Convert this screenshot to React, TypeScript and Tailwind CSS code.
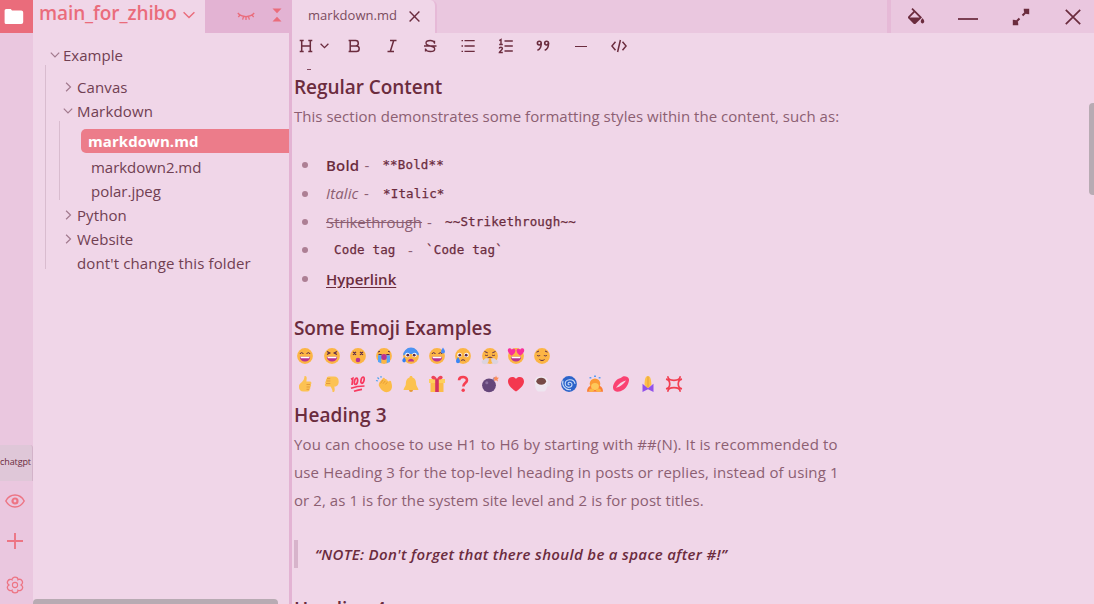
import React from 'react';
import { BiSolidColorFill } from 'react-icons/bi';

type IconProps = { className?: string; children: React.ReactNode; box?: string };

function Stroke({ className = '', children, box = '0 0 16 16' }: IconProps) {
  return (
    <svg viewBox={box} className={'shrink-0 ' + className} fill="none" stroke="currentColor" strokeWidth="1.4">
      {children}
    </svg>
  );
}

function Chevron({ open = false }: { open?: boolean }) {
  return (
    <Stroke className="size-[10px] text-[#a27a8e]" box="0 0 10 10">
      {open ? <path d="M.8 2.6 5 7l4.2-4.4" strokeWidth="1.2" /> : <path d="M3.1.8 7.500 5 3.1 9.2" strokeWidth="1.2" />}
    </Stroke>
  );
}

function Rail() {
  return (
    <aside className="flex w-[33px] shrink-0 flex-col bg-[#eac7df] text-[#ed7584]">
      <div className="flex h-[33px] items-center justify-center bg-[#ea6c7b] pr-[5px] text-white">
        <svg viewBox="0 0 20 17" className="h-[17px] w-[20px]" fill="currentColor">
          <path d="M2.2 1h4.600l1.200 1.500h9.200a2 2 0 0 1 2 2V14a2 2 0 0 1-2 2H2.2a1.6 1.6 0 0 1-1.600-1.6V2.6A1.6 1.6 0 0 1 2.2 1Z" />
        </svg>
      </div>
      <div className="grow" />
      <div className="flex h-[36px] items-center rounded-tr-[3px] border-r border-[#d3b3c9] bg-[#dfc7d8] pb-[3px]">
        <span className="text-[9px] tracking-[-0.1px] whitespace-pre text-[#6b2c3e]">chatgpt</span>
      </div>
      <div className="flex h-[40px] items-center justify-center pr-[3px]">
        <Stroke className="h-[14px] w-[20px]" box="0 0 20 14">
          <path d="M.8 7C3 3 6.3 1.1 10 1.1S17 3 19.2 7C17 11 13.7 12.900 10 12.900S3 11 .8 7Z" strokeWidth="1.500" />
          <circle cx="10" cy="7" r="2.500" strokeWidth="2.200" />
        </Stroke>
      </div>
      <div className="flex h-[40px] items-center justify-center pr-[3px]">
        <Stroke className="size-[16px]"><path d="M8 0v16M0 8h16" strokeWidth="1.9" /></Stroke>
      </div>
      <div className="flex h-[43px] items-center justify-center pt-[4px] pr-[3px]">
        <Stroke className="size-[18px]" box="0 0 18 18">
          <path strokeWidth="1.300" d="M15 9A2.800 2.800 0 0 1 12 14.200A3 2.600 0 0 1 6 14.200A2.800 2.800 0 0 1 3 9A2.800 2.800 0 0 1 6 3.800A3 2.600 0 0 1 12 3.800A2.800 2.800 0 0 1 15 9Z" />
          <circle cx="9" cy="9" r="2.600" strokeWidth="1.100" />
        </Stroke>
      </div>
    </aside>
  );
}

const row = 'flex h-[24px] items-center gap-[4px] whitespace-pre';

function Tree() {
  return (
    <div className="flex flex-1 flex-col pt-[10px] text-[15px] text-[#704052]">
      <div className={row + ' pl-[17px]'}><Chevron open /><span className="-ml-px tracking-[0.02px]">Example</span></div>
      <div className="-mt-[2px] ml-[12px] flex flex-col border-l border-[#d9bccf] pt-[7px]">
        <div className="-mb-[6px] flex flex-col pt-[3px]">
          <div className={row + ' pl-[17px]'}><Chevron /><span className="tracking-[0.1px]">Canvas</span></div>
          <div className={row + ' pl-[17px]'}><Chevron open /><span className="tracking-[0.14px]">Markdown</span></div>
          <div className="-mt-[2px] mb-[3px] ml-[13px] flex flex-col border-l border-[#d9bccf] pt-[8px]">
            <div className="ml-[21px] flex h-[24px] items-center rounded-l-[5px] bg-[#ec7c8a] pl-[7px] font-bold whitespace-pre text-white">
              <span className="tracking-[0.06px]">markdown.md</span>
            </div>
            <div className="-mb-[3px] flex flex-col pt-[2px]">
              <div className={row + ' pl-[31px]'}><span className="tracking-[-0.04px]">markdown2.md</span></div>
              <div className={row + ' pl-[31px]'}><span>polar.jpeg</span></div>
            </div>
          </div>
          <div className={row + ' pl-[17px]'}><Chevron /><span className="tracking-[0.1px]">Python</span></div>
          <div className={row + ' pl-[17px]'}><Chevron /><span>Website</span></div>
          <div className={row + ' pl-[31px]'}><span className="tracking-[0.13px]">dont't change this folder</span></div>
        </div>
      </div>
    </div>
  );
}

function Explorer() {
  return (
    <section className="flex w-[256px] shrink-0 flex-col">
      <header className="flex h-[33px] text-[#ea6c7b]">
        <div className="flex w-[172px] items-center gap-[6px] pb-[7px] pl-[6px]">
          <span className="text-[19px] font-semibold tracking-[-0.1px] whitespace-pre">main_for_zhibo</span>
          <Stroke className="mt-[3px] h-[8px] w-[12px]" box="0 0 12 8"><path d="M.6 1.2 6 6.6l5.4-5.4" strokeWidth="1.400" /></Stroke>
        </div>
        <div className="flex flex-1 items-center justify-end gap-[17px] bg-[#e3b3d3] pr-[7px] pb-[4px]">
          <Stroke className="mt-[3px] h-[9px] w-[18px]" box="0 0 18 9">
            <path d="M.8 1C5 5.700 13 5.700 17.200 1M3.200 2.800 1.300 5M6.600 4.400 5.600 7.600M11.400 4.400l1 3.200M14.800 2.800 16.700 5M9 4.600V8" strokeWidth="1.300" />
          </Stroke>
          <svg viewBox="0 0 10 14" className="h-[14px] w-[10px]" fill="currentColor"><path d="M.5.5h9L5 5.300ZM.5 13.500h9L5 8.700Z" /></svg>
        </div>
      </header>
      <Tree />
      <div className="h-[5px] w-[245px] rounded-t-[4px] bg-[#b8abb3]" />
    </section>
  );
}

function TabBar() {
  return (
    <header className="flex h-[33px] shrink-0 bg-[#eac7df] text-[#6b2c3e]">
      <div className="flex w-[145px] items-center gap-[12px] rounded-tr-[6px] border-r-2 border-[#e6b9d7] bg-[#f0d6e8] pl-[16px]">
        <span className="pb-[2px] text-[13px] tracking-[0.04px] text-[#7b4c5e]">markdown.md</span>
        <Stroke className="size-[11px]" box="0 0 11 11"><path d="M.6.6l9.800 9.800M10.400.6.6 10.400" strokeWidth="1.400" /></Stroke>
      </div>
      <div className="flex-1" />
      <div className="flex w-[207px] items-center border-l-4 border-[#e6b9d7]">
        <div className="flex w-[49px] shrink-0 justify-center"><BiSolidColorFill className="size-[21px]" /></div>
        <div className="flex w-[56px] shrink-0 justify-center pt-[4px]"><div className="h-[2px] w-[20px] bg-[#7b3f53]" /></div>
        <div className="flex w-[50px] shrink-0 justify-center pt-[1px]">
          <Stroke className="size-[18px]" box="0 0 18 18">
            <path d="M10.500 7.500 15 3M7.500 10.500 3 15" strokeWidth="2" />
            <path d="M11.700.8h5.500v5.500L14.500 6.100 11.900 3.500ZM.8 11.700v5.500h5.500L6.100 14.500 3.500 11.900Z" fill="currentColor" stroke="none" />
          </Stroke>
        </div>
        <div className="flex w-[48px] shrink-0 justify-center pl-[6px]">
          <Stroke className="size-[16px]"><path d="m.8.8 14.400 14.400M15.200.8.8 15.200" strokeWidth="1.700" /></Stroke>
        </div>
      </div>
    </header>
  );
}

function Toolbar() {
  const cell = 'flex w-[37.9px] justify-center';
  const slab = 'size-[16px]';
  return (
    <div className="flex h-[26px] shrink-0 items-center pl-[6px] text-[#6b2c3e]">
      <div className="flex w-[38px] items-center gap-[6px]">
        <Stroke className={slab}><path d="M1.700 2.500h4M10.300 2.500h4M1.700 13.500h4M10.300 13.500h4M3.700 2.500v11M12.300 2.500v11M3.700 8h8.600" strokeWidth="1.500" /></Stroke>
        <Stroke className="h-[6px] w-[9px]" box="0 0 9 6"><path d="M.6.8 4.500 4.700 8.400.8" strokeWidth="1.300" /></Stroke>
      </div>
      <div className={cell + ' -ml-[1px]'}>
        <Stroke className={slab}><path d="M2.600 2.500h7a2.700 2.700 0 0 1 0 5.400H4.200M9.600 7.900h.8a2.800 2.800 0 0 1 0 5.600H2.600M4.200 2.500v11" strokeWidth="1.500" /></Stroke>
      </div>
      <div className={cell}><Stroke className={slab}><path d="M6 2.500h6.500M3.500 13.500H10M9.700 2.500l-3.400 11" strokeWidth="1.500" /></Stroke></div>
      <div className={cell}>
        <Stroke className={slab}><path d="M12.500 5.800V2.800M12.500 4.900C11.900 3.200 10.200 2.500 8.300 2.500 5.800 2.500 4 3.400 4 5.100c0 1.900 1.900 2.400 4.300 2.900 2.600.5 4.400 1.100 4.400 2.900 0 1.700-1.800 2.600-4.300 2.600-2.400 0-4.200-.8-4.900-2.600M3.500 10.400v3.200M2 8h12.500" strokeWidth="1.350" /></Stroke>
      </div>
      <div className={cell}>
        <Stroke className={slab}><path d="M4.500 2.700h10.200M4.500 8h10.200M4.500 13.300h10.200M1.500 2.700H3M1.500 8H3M1.500 13.300H3" strokeWidth="1.300" /></Stroke>
      </div>
      <div className={cell}>
        <Stroke className={slab}><path d="M6.500 3h8.300M6.500 8h8.300M6.500 13h8.300" strokeWidth="1.400" /><path d="M1.300 2.600 3 1.500v5M1.200 6.500h3.600M1.200 10.500c.3-1.600 3.200-1.700 3.200.1 0 1.500-2.600 2.100-3 3.900h3.400" strokeWidth="1.400" /></Stroke>
      </div>
      <div className={cell}>
        <Stroke className={slab}><path d="M6.200 5.200c0 4-1.200 6.300-3.800 7M13.500 5.200c0 4-1.200 6.300-3.800 7" strokeWidth="1.600" /><circle cx="4.300" cy="5.100" r="1.900" strokeWidth="1.600" /><circle cx="11.600" cy="5.100" r="1.900" strokeWidth="1.600" /></Stroke>
      </div>
      <div className={cell}><div className="mt-[1px] h-[1.500px] w-[12px] bg-[#6b2c3e]" /></div>
      <div className={cell}>
        <Stroke className={slab}><path d="M4.500 3.800.9 8l3.600 4.200M11.500 3.800 15.100 8l-3.600 4.200M9.400 2 6.600 14" strokeWidth="1.500" /></Stroke>
      </div>
    </div>
  );
}

function Bullet({ children }: { children: React.ReactNode }) {
  return (
    <li className="flex h-[28.4px] items-center whitespace-pre">
      <span className="mr-[18px] ml-[8px] size-[6px] rounded-full bg-[#ad7f94]" />
      {children}
    </li>
  );
}

const code = "pt-[1px] font-['DejaVu_Sans_Mono',monospace] text-[12.5px] tracking-[0.17px] text-[#6b2c3e] [-webkit-text-stroke:0.25px]";
const heading = 'flex items-center text-[19px] font-semibold whitespace-pre text-[#6b2c3e]';

const dark = '#5c2a4a';
const mouth = '#b9328f';
const face = <circle cx="9" cy="9" r="7.900" fill="#fcb544" />;
const grin = <path d="M3.800 9.700h10.400a5.200 4.900 0 0 1-10.400 0Z" fill={mouth} />;
const teeth = <path d="M4.400 9.700h9.200l-.5 1.600H4.900Z" fill="#fff" />;
const arcs = <path d="M4 7c.5-1.800 2.800-1.800 3.300 0M10.700 7c.5-1.800 2.800-1.800 3.300 0" fill="none" stroke={dark} />;
const eyes = <><circle cx="5.500" cy="8" r="2.300" fill="#fff" /><circle cx="12.500" cy="8" r="2.300" fill="#fff" /><circle cx="5.800" cy="8.200" r="1.400" fill={dark} /><circle cx="12.200" cy="8.200" r="1.400" fill={dark} /></>;

const faces: [string, React.ReactNode][] = [
  ['😄', <>{face}{arcs}{grin}{teeth}</>],
  ['😆', <>{face}<path d="m4 4.500 2.800 1.500L4 7.500M14 4.500 11.200 6 14 7.500" fill="none" stroke={dark} strokeWidth="1.200" />{grin}{teeth}</>],
  ['😵', <>{face}<path d="m4 4.800 3 3m0-3-3 3m7-3 3 3m0-3-3 3" stroke={dark} strokeWidth="1.200" /><circle cx="9" cy="13" r="2.300" fill={mouth} /></>],
  ['😭', <>{face}<path d="M3.500 7.500h3.200M11.300 7.500h3.200M5 4.200l-2 .9M13 4.200l2 .9" stroke={dark} /><circle cx="9" cy="10" r="3" fill={mouth} /><path d="M3 8.300h3.300v8L3 15ZM11.700 8.300H15V15l-3.300 1.300Z" fill="#55a5f8" /></>],
  ['😰', <>{face}<path d="M1.100 8.500a7.900 7.900 0 0 1 15.800 0C13 6.500 5 6.500 1.100 8.500Z" fill="#4b93f4" />{eyes}<path d="M6 14.500c0-3.600 6-3.600 6 0Z" fill={mouth} /><path d="M2.300 10c1 1.800 1.600 2.600 1.600 3.600a1.800 1.800 0 0 1-3.600 0c0-1 .9-1.800 2-3.600Z" fill="#3380f5" /></>],
  ['😅', <>{face}{arcs}{grin}{teeth}<path d="M15 .6c1.100 1.900 2 2.900 2 4a2 2 0 0 1-4 0c0-1.100.9-2.100 2-4Z" fill="#4b8bf7" /></>],
  ['😢', <>{face}{eyes}<path d="M6.800 14c.9-1.600 3.500-1.600 4.400 0" fill="none" stroke={dark} /><path d="M4 10c1.200 2 2 2.900 2 4.200a2 2 0 0 1-4 0C2 12.900 2.900 12 4 10Z" fill="#3986f8" /></>],
  ['😤', <>{face}<path d="m3.500 4.500 3.200 1.300M14.500 4.500l-3.200 1.300M4 7.800c.5 1 2.500 1 3 0M11 7.800c.5 1 2.500 1 3 0M6.500 11c1-1 4-1 5 0" fill="none" stroke={dark} /><path d="M7.800 11.500c.5 5-3 6.500-6 5.200C-.5 15 1 12.500 3 13c.5-1.800 3-1.800 4.800-1.500ZM10.200 11.500c-.5 5 3 6.500 6 5.200 2.300-1.700.8-4.200-1.200-3.700-.5-1.800-3-1.800-4.800-1.500Z" fill="#dcd3df" /></>],
  ['😍', <>{face}<path d="M4.800 8.800C-1.500 4.200 1 .5 3 1.300c1 0 1.600.8 1.800 1.500C5.500 1.500 8.800.7 8.400 4c-.3 2-2 3.500-3.600 4.800ZM13.200 8.800c6.300-4.600 3.800-8.300 1.800-7.500-1 0-1.600.8-1.800 1.500C12.500 1.500 9.200.7 9.600 4c.3 2 2 3.500 3.600 4.800Z" fill="#f92f9b" />{grin}{teeth}</>],
  ['😌', <>{face}<path d="M3.500 5.200 6 4M14.500 5.200 12 4M4 8c.5 1.200 2.700 1.200 3.200 0M10.800 8c.5 1.200 2.700 1.200 3.200 0M6.500 12.500c1.200 1.300 3.800 1.300 5 0" fill="none" stroke={dark} /></>],
];

const things: [string, React.ReactNode][] = [
  ['👍', <><path d="M8.500 1c1.800-.5 2.300 1 2.200 2.600l-.3 3h3.400c2 0 2 2.600.8 2.900.9.700.5 2.300-.4 2.500.6.900.1 2-.7 2.300.3 1.500-.6 2.200-2 2.200H7.600C4.500 16.500 3 14.500 3 12.500v-2C4 7.500 8.500 6.500 8.500 1Z" fill="#fcc253" /><path d="M10.500 9.500h3.800M10.500 12h3.300M10.500 14.300h2.700" stroke="#e39a3c" /></>],
  ['👎', <><path d="M9.500 17c1.800.5 2.300-1 2.200-2.600l-.3-3h1.400c2.600-1 2.900-3 2.900-5.200C15.500 3 14 1.500 11 1.500H5.800c-1.400 0-2.300.7-2 2.200-.8.300-1.300 1.400-.7 2.300-.9.200-1.300 1.800-.4 2.500-1.200.3-1.200 2.900.8 2.900h4c1 1.500 2 3 2 5.600Z" fill="#fcc253" /><path d="M3 8.500h4.300M3.500 6h3.800M4 3.700h3.300" stroke="#e39a3c" /></>],
  ['💯', <path d="m2 4.300 1.800-1L3 10M7.700 3.200C5.500 3.200 4.500 9 6.300 9.500 8.500 9.500 9.600 3.500 7.700 3.200ZM14.300 2c-2.200 0-3.300 5.800-1.500 6.300 2.200 0 3.300-6 1.500-6.300ZM2 13.300c4-1.500 9-2.300 13.500-2.300M5 16.300c3-1.200 5.500-1.800 8-2" fill="none" stroke="#f8395f" strokeWidth="1.700" />],
  ['👏', <><path d="m4.500 7.300 3.600-4.200c1-1 2.300.2 1.700 1.300 1-1 2.500 0 1.900 1.200 1-.6 2.200.3 1.800 1.500l.8-1.200c1.300-.7 2 .5 2 1.600 1.500 4.500.7 8-2.800 9.300-4 1.200-6.500-1-8.500-4-1-1.500-2-3-.5-5.500Z" fill="#fcbc47" /><path d="m8 5-2.500 3.500M10.200 6 8 8.700M12.200 7.300 10.500 9.400" stroke="#e79a35" /><path d="M1 5.500 3 6M2.500 2.500 4 4M6 1v1.800" stroke="#4ea2ef" strokeWidth="1.200" /></>],
  ['🔔', <><circle cx="9" cy="15" r="2" fill="#e79a35" /><path d="M9 1c1.200 0 1.500.6 1.500 1.500C13.500 3.500 14 6 14.200 9.500c.2 2 1.800 2.500 2.300 5.500h-15c.5-3 2.100-3.500 2.300-5.500C4 6 4.500 3.500 7.500 2.500 7.500 1.600 7.800 1 9 1Z" fill="#fcc24f" /></>],
  ['🎁', <><path d="M2.500 7h13v10h-13Z" fill="#fcbd49" /><path d="M1 4h16v4H1Z" fill="#fdd05c" /><path d="M7.200 4h3.600v13H7.200Z" fill="#d32f63" /><path d="M9 4.500C5 5 2.500 3.500 3.500 1.700 5-.3 8 1.500 9 4c1-2.500 4-4.300 5.500-2.300 1 1.800-1.500 3.300-5.500 2.800Z" fill="#ee4458" /></>],
  ['❓', <><path d="M5 5.200C5.200 1 13 1 13 5.200c0 2.800-3.700 3-3.700 6.300" fill="none" stroke="#f63f51" strokeWidth="2.600" /><circle cx="9.200" cy="15.300" r="1.700" fill="#f63f51" /></>],
  ['💣', <><path d="m11 6 2.500-3 2.300 1" fill="none" stroke="#a28bb5" strokeWidth="1.800" /><circle cx="8" cy="10.300" r="6.900" fill="#65467a" /><circle cx="5.800" cy="7.800" r="1.500" fill="#8c70a0" /><path d="M15 .5 15.800 2.500 18 2.800 16.400 4.300 17 6.500 15 5.300 13 6.300 13.600 4.200 12.200 2.600 14.300 2.500Z" fill="#fd8a55" /></>],
  ['❤️', <path d="M9 16.500C3.500 13 1 9.500 1 6.300 1 1.500 7 .7 9 4c2-3.300 8-2.500 8 2.300 0 3.200-2.500 6.700-8 10.200Z" fill="#f4384f" />],
  ['☕', <><circle cx="14" cy="8.500" r="2.500" fill="none" stroke="#e9e0ec" strokeWidth="1.500" /><path d="M1.700 5.500h13c0 5.500-1 10-3.500 11h-6c-2.500-1-3.500-5.500-3.500-11Z" fill="#eee6f0" /><ellipse cx="8.200" cy="6" rx="6.500" ry="4.600" fill="#f2ecf3" /><ellipse cx="8.200" cy="6.200" rx="4.900" ry="3.500" fill="#764a46" /></>],
  ['🌀', <><circle cx="9" cy="9" r="7.900" fill="#2c64ca" /><path d="M9.500 9.500c-1.600 1-2.300-2 0-2.200 3-.2 3.700 4.500-.2 5-5 .5-6-7 .3-7.500 3-.2 5 1.800 5.500 4M3 5.500C1.500 10 5 15.500 11 14.600" fill="none" stroke="#c9dcf8" strokeWidth="1.100" /></>],
  ['🙇', <><circle cx="9" cy="8.800" r="5.300" fill="#fb9a34" /><path d="M1 16.800c0-4 2-6 4.500-5.800h7c2.500-.2 4.500 1.800 4.500 5.800Z" fill="#fc7f35" /><ellipse cx="9" cy="11.500" rx="3.900" ry="3.500" fill="#fdc85a" /><ellipse cx="5.500" cy="15.300" rx="2.500" ry="1.700" fill="#fcb544" /><ellipse cx="12.500" cy="15.300" rx="2.500" ry="1.700" fill="#fcb544" /><path d="M3.500 2.800h1.800M8 1.300h2M12.700 2.800h1.800" stroke="#5b9df2" strokeWidth="1.500" /></>],
  ['💋', <><path d="M1 13C.8 9 4 4 8 3.200c1-.3 1.300-.8 2.500-1.500 2-1 3.500-.2 4.800.4 2 1.400 2 2.900 1.500 4.400-.8 4-4 8.500-8.300 9.700C5 17.300 1.500 16.500 1 13Z" fill="#fa4272" /><path d="M4 12.800C6.300 9 10 6.500 14 5.500 11.700 9.200 8.500 11.700 4 12.800Z" fill="#f4d7e5" /></>],
  ['🙏', <><path d="M8.800 1c-3 .2-3 5-3.300 8.500L8.800 14l3.700-4.500C12.100 6 12.100 1 8.800 1Z" fill="#fcc14a" /><path d="M9 1.500V12" stroke="#df9431" strokeWidth=".7" /><path d="m3.500 8.700 5.500 4.500 5.500-4.500V17L9 14.300 3.500 17Z" fill="#9152eb" /></>],
  ['💢', <path d="M2.800 1.300c.2 5.400 12.200 5.400 12.400 0M2.800 16.700c.2-5.400 12.200-5.400 12.400 0M1 4.200c5 .8 5 8.800 0 9.600M17 4.200c-5 .8-5 8.800 0 9.600" fill="none" stroke="#f23f52" strokeWidth="1.700" />],
];

function Emojis({ list }: { list: [string, React.ReactNode][] }) {
  return (
    <div className="flex h-[28px] items-center">
      {list.map(([name, art]) => (
        <span key={name} role="img" aria-label={name} className="flex w-[26.35px] shrink-0 justify-center pr-[4px]">
          <svg viewBox="0 0 18 18" className="size-[18px]">{art}</svg>
        </span>
      ))}
    </div>
  );
}

function Document() {
  return (
    <div className="flex min-h-0 flex-1 overflow-hidden">
      <article className="flex flex-1 flex-col pl-[2px] text-[15px] text-[#8c5f72] *:shrink-0">
        <div className="mt-[10px] ml-[13px] h-[2px] w-[4px] border-t border-[#84495e]" />
        <h3 className={heading + ' mt-[1px] h-[30px] tracking-[-0.05px]'}>Regular Content</h3>
        <p className="h-[28px] leading-[28px] tracking-[0.03px] whitespace-pre">This section demonstrates some formatting styles within the content, such as:</p>
        <ul className="mt-[21px] flex h-[142px] flex-col">
          <Bullet>
            <b className="font-semibold tracking-[0.2px] text-[#6b2c3e]">Bold</b><span className="w-[23px] pl-[5px]">-</span><code className={code}>**Bold**</code>
          </Bullet>
          <Bullet>
            <i className="w-[33px] tracking-[0.1px]">Italic</i><span className="w-[24px] pl-[5px]">-</span><code className={code}>*Italic*</code>
          </Bullet>
          <Bullet>
            <s className="w-[96px]">Strikethrough</s><span className="w-[23px] pl-[5px]">-</span><code className={code}>~~Strikethrough~~</code>
          </Bullet>
          <Bullet>
            <code className={code + ' w-[82px] pl-[8px]'}>Code tag</code><span className="w-[18px]">-</span><code className={code}>`Code tag`</code>
          </Bullet>
          <Bullet><a className="font-semibold text-[#6b2c3e] underline underline-offset-2">Hyperlink</a></Bullet>
        </ul>
        <h3 className={heading + ' mt-[21px] h-[28px] tracking-[-0.1px]'}>Some Emoji Examples</h3>
        <Emojis list={faces} />
        <Emojis list={things} />
        <h3 className={heading + ' h-[32px] pt-[2px] tracking-[0.1px]'}>Heading 3</h3>
        <div className="h-[84px] leading-[28px] whitespace-pre">
          <p className="tracking-[0.13px]">You can choose to use H1 to H6 by starting with ##(N). It is recommended to</p>
          <p className="tracking-[0.135px]">use Heading 3 for the top-level heading in posts or replies, instead of using 1</p>
          <p className="tracking-[0.07px]">or 2, as 1 is for the system site level and 2 is for post titles.</p>
        </div>
        <blockquote className="mt-[26px] flex h-[28px] items-center border-l-4 border-[#d7b4cb] pl-[17px] font-semibold tracking-[0.33px] whitespace-pre text-[#6b2c3e] italic">
          “NOTE: Don't forget that there should be a space after #!”
        </blockquote>
        <h4 className={heading + ' mt-[27px] h-[28px]'}>Heading 4</h4>
      </article>
      <div className="mt-[44px] h-[92px] w-[5px] rounded-l-[4px] bg-[#b8abb3]" />
    </div>
  );
}

export default function App() {
  return (
    <div className="flex h-[604px] w-[1094px] overflow-hidden bg-[#f0d6e8] font-['Open_Sans',sans-serif]">
      <Rail />
      <Explorer />
      <div className="w-[3px] shrink-0 bg-[#e3b3d3]" />
      <main className="flex min-w-0 flex-1 flex-col">
        <TabBar />
        <Toolbar />
        <Document />
      </main>
    </div>
  );
}
